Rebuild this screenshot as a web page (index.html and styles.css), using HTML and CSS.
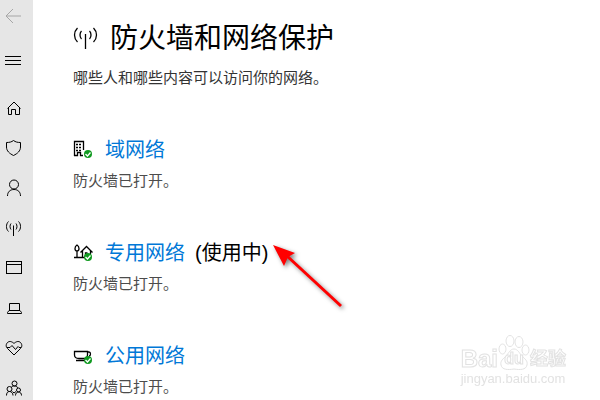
FILE: index.html
```html
<!doctype html>
<html lang="zh-CN">
<head>
    <meta charset="UTF-8">
    <meta name="viewport" content="width=device-width, initial-scale=1.0">
    <title>防火墙和网络保护</title>
    <link rel="stylesheet" href="styles.css">
</head>
<body>
    <nav class="sidebar">
        <button class="nav-button back" type="button" aria-label="返回" disabled>
            <svg viewBox="0 0 18 18"><path d="M17 9H2M9 2L2 9l7 7"/></svg>
        </button>
        <button class="nav-button menu" type="button" aria-label="菜单">
            <svg class="crisp" viewBox="0 0 18 18"><path d="M1 5.5h16M1 9.5h16M1 13.5h16"/></svg>
        </button>
        <div class="nav-list">
            <a class="nav-button" href="#" aria-label="主页">
                <svg viewBox="0 0 18 18"><path d="M2.500 9.500L9 3l6.500 6.500M3.500 8.500v7h3v-5h4v5h4v-7"/></svg>
            </a>
            <a class="nav-button" href="#" aria-label="病毒和威胁防护">
                <svg viewBox="0 0 18 18"><path d="M8.500 1.500C6.500 3 4.500 3.500 1.500 3.500V8c0 4 3 6.500 7 8.500 4-2 7-4.500 7-8.500V3.500c-3 0-5-.5-7-2z"/></svg>
            </a>
            <a class="nav-button" href="#" aria-label="帐户保护">
                <svg viewBox="0 0 18 18"><circle cx="9" cy="5.500" r="4.500"/><path d="M2.500 17c0-4 2.500-6.500 6.500-6.500s6.500 2.500 6.500 6.500"/></svg>
            </a>
            <a class="nav-button" href="#" aria-label="防火墙和网络保护">
                <svg viewBox="0 0 18 18"><path d="M8.500 6.500V17M6 4.500c-1.300 1.500-1.300 4.500 0 6M11 4.500c1.300 1.500 1.300 4.500 0 6M3.500 2.500c-2.700 2.500-2.700 7.500 0 10M13.500 2.500c2.700 2.500 2.700 7.500 0 10"/></svg>
            </a>
            <a class="nav-button" href="#" aria-label="应用和浏览器控制">
                <svg class="crisp" viewBox="0 0 18 18"><path d="M1.500 2.500h15v12h-15zM1.500 5.500h15"/></svg>
            </a>
            <a class="nav-button" href="#" aria-label="设备安全性">
                <svg viewBox="0 0 18 18"><path d="M4.500 11.500v-7h10v7M4 11.500h11l1.500 2v1h-14v-1z"/></svg>
            </a>
            <a class="nav-button" href="#" aria-label="设备性能和运行状况">
                <svg viewBox="0 0 18 18"><path d="M9 16L2.500 9.500C.5 7.500 1 5 2.500 3.500c2-1.800 4.500-1 6.500 1 2-2 4.500-2.800 6.500-1C17 5 17.500 7.500 15.500 9.500zM2 8.500h3l2-2 3.500 4 2.500-3 1 1h2"/></svg>
            </a>
            <a class="nav-button" href="#" aria-label="家庭选项">
                <svg viewBox="0 0 18 18"><circle cx="9.500" cy="4.500" r="2.500"/><circle cx="4.500" cy="10" r="2.500"/><circle cx="13.500" cy="11" r="2"/><path d="M1.500 16.500c0-2.500 1-4 3-4s3.500 1.500 3.500 4M10.500 16.500c0-2 1-3.500 3-3.500s3 1.500 3 3.500M6.500 8c.7-1 1.500-1 3-1 2 0 3 .7 3 2M7.500 12.500L9 14l2-1.500"/></svg>
            </a>
        </div>
    </nav>

    <main class="content">
        <header class="title-row">
            <svg class="title-icon" viewBox="0 0 26 26"><path d="M12.500 8v15M8.500 5c-2 2-2 6 0 8M16.500 5c2 2 2 6 0 8M4.500 2c-4 4-4 10 0 14M20.500 2c4 4 4 10 0 14"/></svg>
            <h1>防火墙和网络保护</h1>
        </header>
        <p class="intro">哪些人和哪些内容可以访问你的网络。</p>

        <section class="network">
            <h2>
                <svg class="network-icon" viewBox="0 0 20 20">
                    <path d="M1.500 16V1.500h9V10M1 15.500h3.500v-3h3v3H10"/>
                    <path class="windows" d="M3 4.500h6M3 7.500h6M3 10.500h6"/>
                    <circle class="ok" cx="15" cy="14" r="4"/>
                    <path class="tick" d="M12.500 14l2 2 3-3.500"/>
                </svg>
                <a href="#">域网络</a>
            </h2>
            <p>防火墙已打开。</p>
        </section>

        <section class="network">
            <h2>
                <svg class="network-icon" viewBox="0 0 20 20">
                    <path d="M4 2C2.500 3 2 4 2 5.500S2.800 8 4 8s2-1 2-2.500S5.500 3 4 2zM4 8v6M1 14.500h11M7.500 9.500l6-6 6 6M9.500 8v6.500M17.500 8v3M12.500 14v-4h2"/>
                    <circle class="ok" cx="15" cy="14" r="4"/>
                    <path class="tick" d="M12.500 14l2 2 3-3.500"/>
                </svg>
                <a href="#">专用网络</a>
                <span>(使用中)</span>
            </h2>
            <p>防火墙已打开。</p>
            <svg class="pointer" viewBox="0 0 80 74">
                <path class="pointer-line" d="M17 16L71 66"/>
                <path class="pointer-head" d="M3 5l22 8-7 4-4 9z"/>
            </svg>
        </section>

        <section class="network">
            <h2>
                <svg class="network-icon" viewBox="0 0 20 20">
                    <path d="M1.500 5.500h13V9c0 2-1.500 3.500-4 3.500H6c-3 0-4.500-1.500-4.500-3.500zM14.500 6h1.500c2 0 2 4 0 4M3 14.500h9"/>
                    <circle class="ok" cx="15" cy="14" r="4"/>
                    <path class="tick" d="M12.500 14l2 2 3-3.500"/>
                </svg>
                <a href="#">公用网络</a>
            </h2>
            <p>防火墙已打开。</p>
        </section>
    </main>

    <div class="watermark">
        <div class="brand">
            <span class="latin">Bai</span>
            <span class="paw">
                <svg viewBox="0 0 32 36">
                    <ellipse cx="4.500" cy="14" rx="3.500" ry="5"/>
                    <ellipse cx="12" cy="6" rx="4" ry="5.500"/>
                    <ellipse cx="21" cy="7" rx="4" ry="5.500"/>
                    <ellipse cx="27.500" cy="15" rx="3.500" ry="5"/>
                    <path d="M16 14c-4 0-5 4-8 7-3 3-6 5-5 9 1 5 7 5 13 4 6 1 12 1 13-4 1-4-2-6-5-9-3-3-4-7-8-7z"/>
                </svg>
                <span>du</span>
            </span>
            <span class="product">经验</span>
        </div>
        <div class="address">jingyan.baidu.com</div>
    </div>
</body>
</html>
```
FILE: styles.css
```css
body {
    display: flex;
    min-height: 100vh;
    margin: 0;
    background: #fff;
    color: #000;
    font-family: "Liberation Sans", "Noto Sans CJK SC", sans-serif;
}
h1, h2, p {
    margin: 0;
    font-weight: 400;
}
svg {
    flex: none;
    fill: none;
    stroke: #000;
}

/* Left navigation */
.sidebar {
    box-sizing: border-box;
    flex: none;
    width: 33px;
    padding: 4px 0 0 4px;
    background: #e6e6e6;
}
.nav-button {
    display: flex;
    align-items: center;
    width: 24px;
    height: 24px;
    padding: 0;
    border: 0;
    background: none;
}
.nav-button svg {
    width: 18px;
    height: 18px;
}
.crisp {
    shape-rendering: crispEdges;
}
.back svg {
    stroke: #a6a6a6;
}
.menu {
    margin: 20px 0 24px;
}
.nav-list {
    display: flex;
    flex-direction: column;
    gap: 16px;
    padding-left: 1px;
}

/* Page content */
.content {
    flex: 1;
    padding: 18px 0 0 40px;
}
.title-row {
    display: flex;
    align-items: center;
    gap: 11px;
}
.title-icon {
    width: 26px;
    height: 26px;
    stroke-width: 1.3;
}
h1 {
    font-size: 28px;
    line-height: 42px;
}
p {
    font-size: 15px;
    line-height: 24px;
}
.intro {
    margin-top: 6px;
    color: #333;
}
.network {
    position: relative;
    margin-top: 48px;
}
.network h2 {
    display: flex;
    align-items: center;
    gap: 12px;
    font-size: 20px;
    line-height: 24px;
}
.network a {
    color: #0078d7;
    text-decoration: none;
}
.network p {
    margin-top: 7px;
    color: #4c4c4c;
}
.network-icon {
    width: 20px;
    height: 20px;
    stroke-width: 1.3;
}
.network span {
    margin-left: -2px;
}
.windows {
    stroke-dasharray: 2 1;
}
.network-icon .ok {
    fill: #109a20;
    stroke: none;
}
.network-icon .tick {
    stroke: #fff;
}

/* Red arrow over the active network */
.pointer {
    position: absolute;
    top: -1px;
    left: 197px;
    width: 80px;
    height: 74px;
    filter: drop-shadow(2px 2px 2px rgba(0, 0, 0, 0.5));
}
.pointer-line {
    stroke: #f00;
    stroke-width: 3;
}
.pointer-head {
    fill: #f00;
    stroke: none;
}

.watermark {
    position: fixed;
    right: 34px;
    bottom: 13px;
    color: #fff;
    -webkit-text-stroke: 1px #e2e2e2;
}
.brand {
    display: flex;
    align-items: flex-end;
    font-weight: 700;
    line-height: 24px;
}
.latin {
    font-size: 24px;
}
.paw {
    position: relative;
    width: 32px;
    height: 36px;
    font-size: 16px;
}
.paw svg {
    width: 32px;
    height: 36px;
    fill: #fff;
    stroke: #e2e2e2;
}
.paw span {
    position: absolute;
    right: 0;
    bottom: 0;
    left: 0;
    text-align: center;
}
.product {
    font-size: 18px;
}
.address {
    color: #e2e2e2;
    font-size: 13px;
    line-height: 16px;
    -webkit-text-stroke: 0;
}
```
